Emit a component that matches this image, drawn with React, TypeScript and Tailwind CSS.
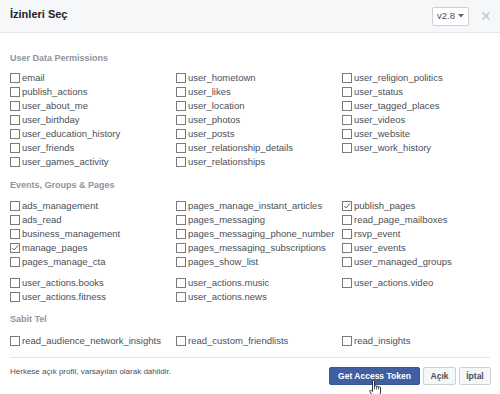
import React from "react";

type Perm = { name: string; checked?: boolean };

const userData: Perm[][] = [
  [
    { name: "email" },
    { name: "publish_actions" },
    { name: "user_about_me" },
    { name: "user_birthday" },
    { name: "user_education_history" },
    { name: "user_friends" },
    { name: "user_games_activity" },
  ],
  [
    { name: "user_hometown" },
    { name: "user_likes" },
    { name: "user_location" },
    { name: "user_photos" },
    { name: "user_posts" },
    { name: "user_relationship_details" },
    { name: "user_relationships" },
  ],
  [
    { name: "user_religion_politics" },
    { name: "user_status" },
    { name: "user_tagged_places" },
    { name: "user_videos" },
    { name: "user_website" },
    { name: "user_work_history" },
  ],
];

const pages: Perm[][] = [
  [
    { name: "ads_management" },
    { name: "ads_read" },
    { name: "business_management" },
    { name: "manage_pages", checked: true },
    { name: "pages_manage_cta" },
  ],
  [
    { name: "pages_manage_instant_articles" },
    { name: "pages_messaging" },
    { name: "pages_messaging_phone_number" },
    { name: "pages_messaging_subscriptions" },
    { name: "pages_show_list" },
  ],
  [
    { name: "publish_pages", checked: true },
    { name: "read_page_mailboxes" },
    { name: "rsvp_event" },
    { name: "user_events" },
    { name: "user_managed_groups" },
  ],
];

const actions: Perm[][] = [
  [{ name: "user_actions.books" }, { name: "user_actions.fitness" }],
  [{ name: "user_actions.music" }, { name: "user_actions.news" }],
  [{ name: "user_actions.video" }],
];

const sabit: Perm[][] = [
  [{ name: "read_audience_network_insights" }],
  [{ name: "read_custom_friendlists" }],
  [{ name: "read_insights" }],
];

function Row({ perm }: { perm: Perm }) {
  return (
    <div className="flex items-center h-[14px] whitespace-nowrap">
      <span className="relative w-[10px] h-[10px] border border-[#7a7a7a] bg-white mr-[2px] shrink-0">
        {perm.checked && (
          <svg className="absolute left-0 top-0" width="8" height="8" viewBox="0 0 8 8">
            <path d="M1.2 4 L3.2 6 L7 1.3" fill="none" stroke="#666" strokeWidth="1" />
          </svg>
        )}
      </span>
      <span>{perm.name}</span>
    </div>
  );
}

function Group({ cols, className = "" }: { cols: Perm[][]; className?: string }) {
  return (
    <div className={`grid grid-cols-[166px_166px_166px] ${className}`}>
      {cols.map((col, i) => (
        <div key={i} className="flex flex-col">
          {col.map((p) => (
            <Row key={p.name} perm={p} />
          ))}
        </div>
      ))}
    </div>
  );
}

function Heading({ children, className = "" }: { children: React.ReactNode; className?: string }) {
  return (
    <div className={`text-[9px] leading-[12px] font-bold text-[#90949c] ${className}`}>{children}</div>
  );
}

export default function App() {
  return (
    <div className="w-[500px] h-[394px] bg-white overflow-hidden font-['Liberation_Sans',Arial,sans-serif] text-[#4b4f56]">
      {/* Header */}
      <div className="h-[33px] bg-[#f6f7f9] border-b border-[#e5e5e5] flex items-center pl-[10px] pr-[10px]">
        <span className="text-[11px] font-bold text-[#1d2129] mb-[3px]">İzinleri Seç</span>
        <div className="ml-auto flex items-center">
          <button className="h-[19px] w-[37px] border border-[#ced0d4] bg-white rounded-[2px] flex items-center justify-center gap-[3px] text-[9.5px] text-[#4b4f56]">
            v2.8
            <svg width="6" height="4" viewBox="0 0 6 4">
              <path d="M0 0 H6 L3 3.5 Z" fill="#606770" />
            </svg>
          </button>
          <svg className="ml-[13px]" width="8" height="8" viewBox="0 0 8 8">
            <path d="M0.5 0.5 L7.5 7.5 M7.5 0.5 L0.5 7.5" stroke="#bec2c9" strokeWidth="1.4" />
          </svg>
        </div>
      </div>

      {/* Body */}
      <div className="px-[10px] text-[9.5px]">
        <Heading className="mt-[19px] mb-[7px]">User Data Permissions</Heading>
        <Group cols={userData} />

        <Heading className="mt-[10px] mb-[8px]">Events, Groups &amp; Pages</Heading>
        <Group cols={pages} />
        <Group cols={actions} className="mt-[7px]" />

        <Heading className="mt-[9px] mb-[9px]">Sabit Tel</Heading>
        <Group cols={sabit} />
      </div>

      {/* Footer */}
      <div className="mx-[10px] mt-[9px] border-t border-[#e5e5e5] pt-[9px] flex items-start">
        <span className="text-[8px] leading-[10px] text-[#4b4f56]">Herkese açık profil, varsayılan olarak dahildir.</span>
        <div className="ml-auto flex gap-[3px] mr-[-1px]">
          <button className="relative h-[18px] w-[91px] bg-[#3f5fa1] border border-[#365899] rounded-[2px] text-white text-[8.5px] font-bold">
            Get Access Token
            <svg className="absolute left-[38px] top-[11px] pointer-events-none" width="15" height="18" viewBox="0 0 15 18">
              <path
                d="M4.5 9 V2 Q4.5 1 5.5 1 Q6.5 1 6.5 2 V7.5 Q6.5 6.7 7.5 6.7 Q8.5 6.7 8.5 7.5 V8 Q8.5 7.2 9.5 7.2 Q10.5 7.2 10.5 8 V8.5 Q10.5 7.8 11.5 7.8 Q12.5 7.8 12.5 8.8 V13 Q12.5 16 10.5 17.5 H5.5 L2 13 Q1.3 11.8 2.3 11.3 Q3.2 10.9 4.5 12.5 Z"
                fill="#fff"
                stroke="#222"
                strokeWidth="0.9"
              />
              <path d="M6.5 7.5 V10.5 M8.5 8 V10.5 M10.5 8.5 V10.5" stroke="#222" strokeWidth="0.7" />
            </svg>
          </button>
          <button className="h-[18px] w-[33px] bg-[#f6f7f9] border border-[#ced0d4] rounded-[2px] text-[#4b4f56] text-[8.5px] font-bold">
            Açık
          </button>
          <button className="h-[18px] w-[32px] bg-[#f6f7f9] border border-[#ced0d4] rounded-[2px] text-[#4b4f56] text-[8.5px] font-bold">
            İptal
          </button>
        </div>
      </div>
    </div>
  );
}
